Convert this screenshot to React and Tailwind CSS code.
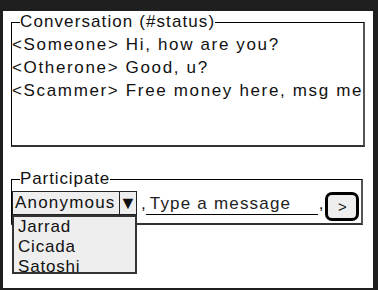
import React from "react";

const font = { fontFamily: '"Liberation Sans", Arial, sans-serif' };

export default function App() {
  return (
    <div className="w-[378px] h-[290px] bg-[#1f1f1f] pt-[5px] pl-[3px] overflow-hidden" style={font}>
      <div className="relative w-[370px] h-[277px] bg-white pl-[8px] text-[17px] tracking-[1.2px] text-[#111]">
        <fieldset className="mt-[6px] w-[352px] h-[136px] border-t border-l border-black border-r-2 border-b-2 border-r-[#555] border-b-[#333] overflow-hidden">
          <legend className="ml-[8px] leading-[22px] tracking-[1.1px]">Conversation (#status)</legend>
          <div className="leading-[23px] tracking-[1.65px] whitespace-nowrap overflow-hidden">
            <div>&lt;Someone&gt; Hi, how are you?</div>
            <div>&lt;Otherone&gt; Good, u?</div>
            <div>&lt;Scammer&gt; Free money here, msg me</div>
          </div>
        </fieldset>
        <fieldset className="relative mt-[21px] w-[352px] h-[57px] border-t border-l border-black border-r-2 border-b-2 border-r-[#555] border-b-[#333]">
          <legend className="ml-[8px] leading-[22px] tracking-[0.9px]">Participate</legend>
          <div className="flex items-start pt-[1px]">
            <div className="relative w-[125px] h-[24px] flex border border-[#222] bg-[#eee]">
              <div className="flex-1 pl-[2px] leading-[22px] tracking-[1.2px]">Anonymous</div>
              <div className="w-[17px] border-l border-[#222] flex items-center justify-center text-[18px] tracking-normal leading-none">▼</div>
              <div className="absolute left-[-1px] top-[23px] w-[125px] h-[59px] border-2 border-[#333] bg-[#eee] pl-[4px] leading-[20px] tracking-[0.8px] z-10">
                <div>Jarrad</div>
                <div>Cicada</div>
                <div>Satoshi</div>
              </div>
            </div>
            <div className="ml-[4px] flex items-end h-[24px] leading-[22px]">
              <span className="tracking-normal">,</span>
              <span className="w-[172px] pl-[4px] border-b border-black leading-[20px] text-[#222]">Type a message</span>
              <span className="ml-[1px] tracking-normal">,</span>
            </div>
            <button className="ml-[2px] mt-[1px] w-[34px] h-[29px] border-[3px] border-black rounded-[7px] bg-[#eee] flex items-center justify-center text-[15px] tracking-normal leading-none">&gt;</button>
          </div>
        </fieldset>
      </div>
    </div>
  );
}
